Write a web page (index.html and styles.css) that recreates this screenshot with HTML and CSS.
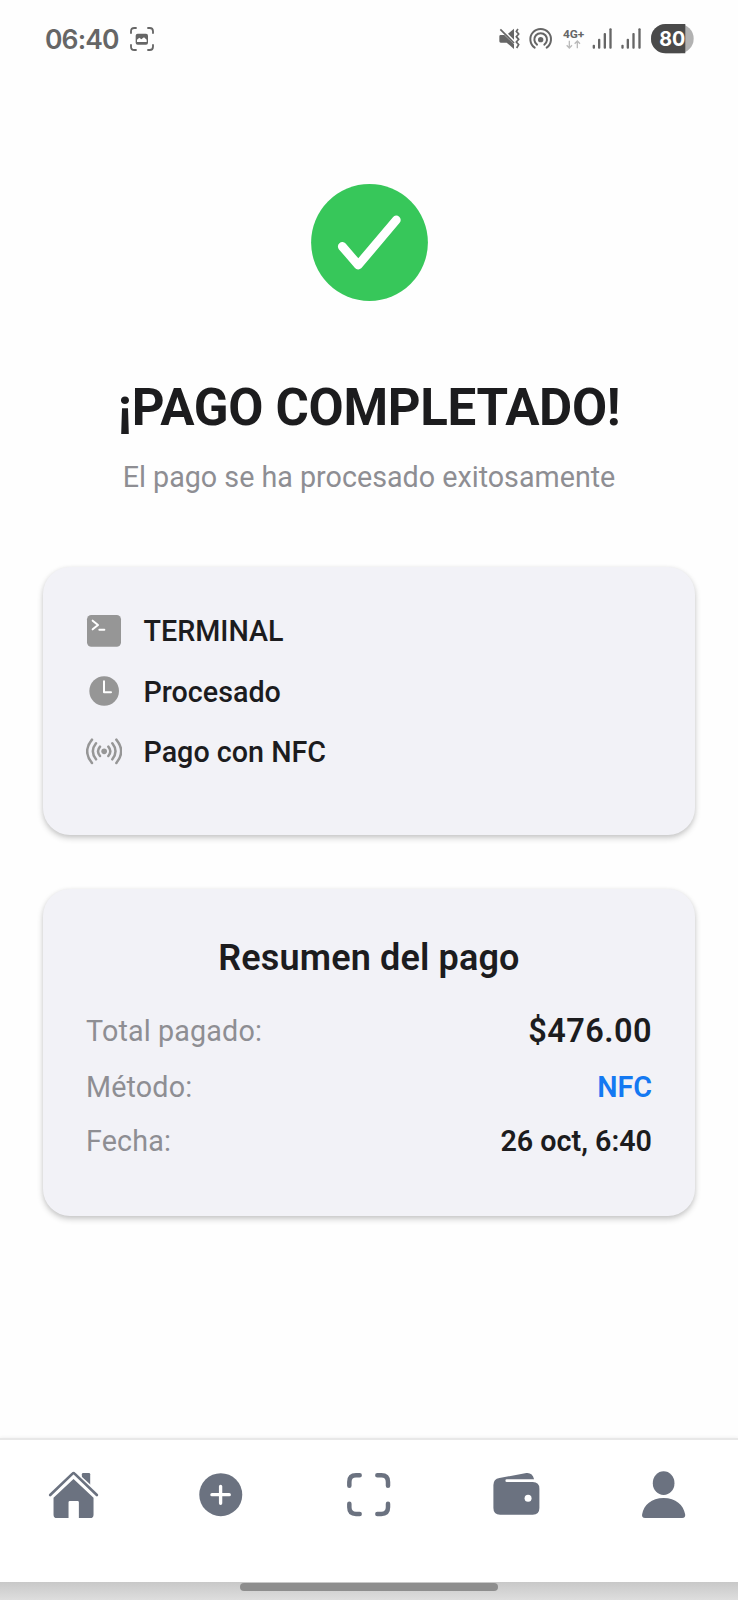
FILE: index.html
```html
<!DOCTYPE html>
<html lang="es">
<head>
<meta charset="utf-8">
<title>Pago completado</title>
<link rel="stylesheet" href="styles.css">
</head>
<body>
<div class="screen">
  <header class="status">
    <div class="status-left">
      <span class="clock">06:40</span>
      <svg class="capture" viewBox="0 0 72 72" fill="none" stroke="#666" stroke-width="5.5" stroke-linecap="round">
        <path d="M3 18V13Q3 3 13 3H18M54 3H59Q69 3 69 13V18M69 54V59Q69 69 59 69H54M18 69H13Q3 69 3 59V54"/>
        <rect x="17" y="20" width="37" height="33" rx="6" fill="#666" stroke="none"/>
        <path d="M21 45V38L28 32L34 37L42 31L50 38V45Z" fill="#fff" stroke="none"/>
      </svg>
    </div>
    <svg class="status-icons" viewBox="50 40 600 96">
      <g fill="#666">
        <path d="M57 80Q57 76 61 76H72L101 104V118L79 99H61Q57 99 57 95Z"/>
        <path d="M83 72L101 57V90Z"/>
        <path d="M60 59L101 100" stroke="#666" stroke-width="5"/>
        <path d="M113 58L108 65L115 73L108 81L115 89L108 97L115 105L109 115" fill="none" stroke="#666" stroke-width="5"/>
      </g>
      <g fill="none" stroke="#666" stroke-width="6" stroke-linecap="round">
        <path d="M163 114A31 31 0 1 1 199 114"/>
        <path d="M170 105A19 19 0 1 1 192 105"/>
        <circle cx="181" cy="90" r="8" fill="#666" stroke="none"/>
      </g>
      <text class="net" x="248" y="84" textLength="64" lengthAdjust="spacingAndGlyphs">4G+</text>
      <path d="M267 93V114M259 107L267 115L275 107M291 116V95M283 102L291 94L299 102" fill="none" stroke="#bbb" stroke-width="4"/>
      <g fill="#666">
        <rect x="337" y="105" width="7" height="12" rx="3"/><rect x="353" y="87" width="7" height="30" rx="3"/><rect x="370" y="70" width="7" height="47" rx="3"/><rect x="387" y="56" width="7" height="61" rx="3"/>
        <rect x="423" y="105" width="7" height="12" rx="3"/><rect x="439" y="87" width="7" height="30" rx="3"/><rect x="456" y="70" width="7" height="47" rx="3"/><rect x="474" y="56" width="7" height="61" rx="3"/>
      </g>
      <rect x="512" y="43" width="128" height="88" rx="44" fill="#b2b2b2"/>
      <path d="M615 43H556A44 44 0 0 0 556 131H615Z" fill="#4a4a4a"/>
      <text class="battery" x="537" y="110" textLength="78" lengthAdjust="spacingAndGlyphs">80</text>
    </svg>
  </header>

  <main class="content">
    <svg class="success" viewBox="0 0 117 117">
      <circle cx="58.5" cy="58.5" r="58.4" fill="#37c75a"/>
      <path d="M31.3 62.5L47.3 81L85.3 36" fill="none" stroke="#fff" stroke-width="8.8" stroke-linecap="round" stroke-linejoin="round"/>
    </svg>
    <h1 class="title">¡PAGO COMPLETADO!</h1>
    <p class="subtitle">El pago se ha procesado exitosamente</p>

    <section class="card info">
      <div class="info-row">
        <svg class="info-icon" viewBox="168 168 108 108">
          <rect x="171" y="177" width="102" height="95" rx="13" fill="#969696"/>
          <path d="M188 194L204 207L188 220M208 221H223" fill="none" stroke="#fff" stroke-width="6" stroke-linecap="round" stroke-linejoin="round"/>
        </svg>
        <span>TERMINAL</span>
      </div>
      <div class="info-row">
        <svg class="info-icon" viewBox="168 350 108 108">
          <circle cx="222.5" cy="407" r="44.5" fill="#969696"/>
          <path d="M222 378V411H243" fill="none" stroke="#fff" stroke-width="6" stroke-linecap="round" stroke-linejoin="round"/>
        </svg>
        <span>Procesado</span>
      </div>
      <div class="info-row">
        <svg class="info-icon" viewBox="168 532 108 108" fill="none" stroke="#969696" stroke-width="7.5" stroke-linecap="round">
          <circle cx="222.500" cy="587" r="8.5" fill="#969696" stroke="none"/>
          <path d="M210 573Q198 587 210 601M235 573Q247 587 235 601M198 563Q179 587 198 611M247 563Q266 587 247 611M186 552Q157 587 186 622M259 552Q288 587 259 622"/>
        </svg>
        <span>Pago con NFC</span>
      </div>
    </section>

    <section class="card summary">
      <h2 class="summary-title">Resumen del pago</h2>
      <div class="line total"><span class="label">Total pagado:</span><span class="value amount">$476.00</span></div>
      <div class="line method"><span class="label">Método:</span><span class="value blue">NFC</span></div>
      <div class="line"><span class="label">Fecha:</span><span class="value">26 oct, 6:40</span></div>
    </section>
  </main>

  <nav class="tabs">
    <a class="tab"><svg class="tab-icon" viewBox="47.4 111 168 168">
      <path d="M155 150V133Q155 129 159 129H176Q180 129 180 133V174Z"/>
      <path d="M60 195L130 131L200 195" fill="none" stroke="#fff" stroke-width="20"/>
      <path d="M130 147L190 203V254Q190 264 180 264H146V217Q146 213 142 213H119Q115 213 115 217V264H80Q70 264 70 254V203Z"/>
      <path d="M60 195L127 131Q130 128 133 131L200 195" fill="none" stroke="#6b7280" stroke-width="8" stroke-linecap="round"/>
    </svg></a>
    <a class="tab"><svg class="tab-icon" viewBox="490.200 111 168 168">
      <circle cx="573.5" cy="194" r="64.500"/>
      <path d="M573 169V220M547 194H599" stroke="#fff" stroke-width="10" stroke-linecap="round"/>
    </svg></a>
    <a class="tab"><svg class="tab-icon" viewBox="63 111 168 168">
      <path d="M119 136H108Q88 136 88 156V167M172 136H184Q204 136 204 156V167M204 221V232Q204 252 184 252H172M119 252H108Q88 252 88 232V221" fill="none" stroke="#6b7280" stroke-width="13.500" stroke-linecap="round"/>
    </svg></a>
    <a class="tab"><svg class="tab-icon" viewBox="505.800 111 168 168">
      <path d="M519 165Q519 147 537 144L618 129Q636 127 641 148H559Q555 148 555 152Q555 156 559 156H637Q657 156 657 176V234Q657 254 637 254H539Q519 254 519 234Z"/>
      <circle cx="623" cy="204.500" r="10.500" fill="#fff"/>
    </svg></a>
    <a class="tab"><svg class="tab-icon" viewBox="948.600 111 168 168">
      <ellipse cx="1031.500" cy="159.500" rx="32.500" ry="35.500"/>
      <path d="M1031.500 204C1068 204 1091 225 1096 253Q1098 264 1087 264H976Q965 264 967 253C972 225 995 204 1031.500 204Z"/>
    </svg></a>
  </nav>
  <footer class="gesture"><div class="pill"></div></footer>
</div>
</body>
</html>
```
FILE: styles.css
```css
* { box-sizing: border-box; }
body {
  margin: 0;
  background: #fefefe;
  font-family: Roboto, "Liberation Sans", sans-serif;
  color: #1c1c1e;
}
.screen {
  width: 738px;
  height: 1600px;
  display: flex;
  flex-direction: column;
  overflow: hidden;
}
.status {
  flex: none;
  height: 78px;
  padding: 0 41px 0 45px;
  display: flex;
  align-items: center;
  justify-content: space-between;
}
.status-left { display: flex; align-items: center; gap: 12px; }
.clock { font: 600 26.500px/32px Inter, sans-serif; color: #666; width: 73px; white-space: nowrap; letter-spacing: -0.9px; }
.capture { width: 24px; height: 24px; }
.status-icons { width: 200px; height: 32px; }
.net { font: 700 34px Roboto, sans-serif; fill: #666; }
.battery { font: 700 62px Inter, sans-serif; fill: #fff; }
.content {
  flex: 1;
  padding: 105.500px 43px 0;
  display: flex;
  flex-direction: column;
  align-items: center;
}
.success { flex: none; width: 117px; height: 117px; }
.title {
  margin: 77px 0 0;
  font-size: 51px;
  line-height: 60px;
  font-weight: 700;
  letter-spacing: -0.3px;
  white-space: nowrap;
}
.subtitle {
  margin: 22.500px 0 0;
  font-size: 28.700px;
  line-height: 34px;
  color: #8e8e93;
  white-space: nowrap;
}
.card {
  width: 652px;
  flex: none;
  border-radius: 27px;
  background: #f2f2f7;
  box-shadow: 0 3px 6px rgba(0,0,0,.2), 0 1px 4px rgba(0,0,0,.06);
}
.info {
  margin-top: 73px;
  height: 268px;
  padding: 34px 43px;
  font-size: 28.700px;
  font-weight: 500;
}
.info-row {
  height: 60.500px;
  display: flex;
  align-items: center;
  gap: 21.500px;
}
.info-icon { width: 36px; height: 36px; margin-bottom: 3px; }
.summary {
  margin-top: 54px;
  height: 327px;
  padding: 47px 43px 0;
}
.summary-title {
  margin: 0 0 29px;
  text-align: center;
  font-size: 36px;
  line-height: 44px;
  font-weight: 600;
  letter-spacing: 0.15px;
}
.line {
  height: 44px;
  margin-bottom: 9.500px;
  display: flex;
  align-items: center;
  justify-content: space-between;
  font-size: 28.700px;
}
.total { margin-bottom: 12px; }
.label { color: #8e8e93; letter-spacing: 0.15px; }
.value { font-weight: 600; }
.amount { font-size: 32.500px; font-weight: 600; letter-spacing: 0.45px; }
.blue { color: #1479f2; }
.tabs {
  flex: none;
  height: 144px;
  padding-top: 27px;
  display: flex;
  background: #fff;
  border-top: 2px solid #e8e8e8;
  box-shadow: 0 -1px 3px rgba(0,0,0,.05);
}
.tab { flex: 1; display: flex; justify-content: center; align-items: flex-start; }
.tab-icon { width: 56px; height: 56px; fill: #6b7280; }
.gesture {
  flex: none;
  height: 18px;
  padding-top: 1px;
  display: flex;
  justify-content: center;
  background: linear-gradient(#c8c8c8, #dedede);
}
.pill { width: 258px; height: 8px; border-radius: 4px; background: #8e8e8e; }
```
